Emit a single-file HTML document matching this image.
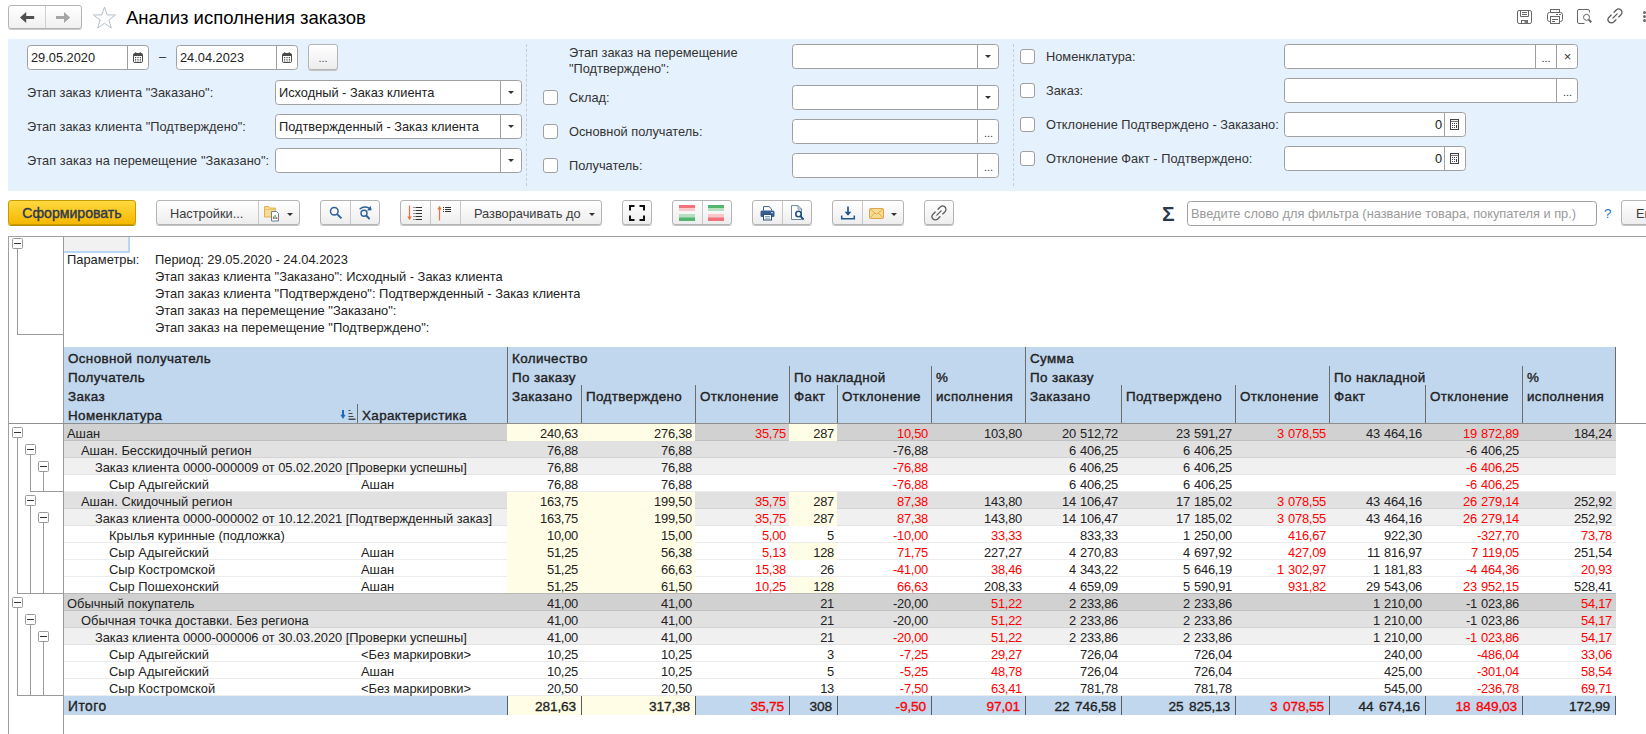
<!DOCTYPE html><html lang="ru"><head><meta charset="utf-8"><title>Анализ исполнения заказов</title><style>
*{box-sizing:border-box}
html,body{margin:0;padding:0}
body{width:1646px;height:734px;overflow:hidden;background:#fff;font-family:"Liberation Sans",Arial,sans-serif;font-size:12.8px;color:#333;position:relative}
.abs{position:absolute}
.title{position:absolute;left:126px;top:6px;font-size:18.5px;line-height:24px;color:#000;white-space:nowrap}
.nav{position:absolute;left:8px;top:5px;width:74px;height:24px;border:1px solid #b4b4b4;border-radius:3px;background:linear-gradient(#fff,#f0f0f0);box-shadow:0 1px 0 #c9c9c9}
.nav i{position:absolute;left:36px;top:0;width:1px;height:22px;background:#d0d0d0}
.panel{position:absolute;left:8px;top:39px;width:1638px;height:152px;background:#e5f1fc}
.vsep{position:absolute;top:5px;height:142px;width:0;border-left:1px dashed #c5cdd6}
.lbl{position:absolute;white-space:nowrap;line-height:16px;color:#333}
.inp{position:absolute;height:25px;border:1px solid #a0a0a0;border-radius:3.500px;background:#fff;overflow:hidden}
.inp .t{position:absolute;left:3px;top:0;line-height:23px;white-space:nowrap;color:#222}
.inp .b{position:absolute;top:0;bottom:0;border-left:1px solid #a0a0a0;text-align:center;line-height:23px;color:#333}
.cb{position:absolute;width:15px;height:15px;border:1px solid #a0a0a0;border-radius:3px;background:#fff}
.arr{position:absolute;width:0;height:0;border-left:3px solid transparent;border-right:3px solid transparent;border-top:3px solid #333}
.btn{position:absolute;top:200px;height:25px;border:1px solid #b4b4b4;border-radius:3px;background:linear-gradient(#fff,#ededed);box-shadow:0 1px 0 #c4c4c4;white-space:nowrap;line-height:25px;color:#3c3c3c;font-size:12.8px}
.btn i.d{position:absolute;top:0;width:1px;height:23px;background:#c8c8c8}
.btn svg{position:absolute}
.report{position:absolute;left:8px;top:236px;width:1638px;height:498px;border-top:1px solid #a0a0a0;border-left:1px solid #a0a0a0;background:#fff;font-size:12.9px;color:#222}
.row{position:absolute;left:56px;width:1552px;height:17px}
.c{position:absolute;top:0;height:17px;line-height:19px;white-space:nowrap;overflow:hidden}
.n{text-align:right;padding-right:3px;letter-spacing:-0.25px;word-spacing:.8px}
.r{color:#ff0000}
.y{background:#fffde5}
.hd{position:absolute;font-weight:normal;font-size:13.4px;letter-spacing:.38px;-webkit-text-stroke:.38px #222;white-space:nowrap;line-height:19px;color:#222}
.vl{position:absolute;width:1px;background:#6c6c6c}
.tb{position:absolute;width:11px;height:11px;border:1px solid #9a9a9a;border-radius:1.5px;background:#fff}
.tb:after{content:"";position:absolute;left:1px;top:4px;width:7px;height:1px;background:#333}
.tl{position:absolute;background:#9a9a9a}
</style></head><body>
<div class="nav"><i></i><svg class="abs" style="left:11px;top:6px" width="15" height="11" viewBox="0 0 15 11"><path d="M0 5.5L6.2 0V3.9H14.2V7.1H6.2V11Z" fill="#505050"/></svg><svg class="abs" style="left:47px;top:6px" width="15" height="11" viewBox="0 0 15 11"><path d="M14.2 5.5L8 0V3.9H0V7.1H8V11Z" fill="#a6a6a6"/></svg></div>
<svg class="abs" style="left:92px;top:5.500px" width="25" height="24" viewBox="0 0 25 24"><path d="M12.5 1.0 L15.2 8.9 L23.5 9.0 L16.9 14.0 L19.3 22.0 L12.5 17.2 L5.7 22.0 L8.1 14.0 L1.5 9.0 L9.8 8.9Z" fill="#fff" stroke="#b4c0c8" stroke-width="1"/></svg>
<div class="title">Анализ исполнения заказов</div>
<svg class="abs" style="left:1517px;top:10px" width="15" height="14" viewBox="0 0 15 14" fill="none" stroke="#666" stroke-width="1"><rect x="0.500" y="0.500" width="14" height="13" rx="1.600"/><path d="M3.500 0.500V6.500H11.500V0.500M5 2.500H10M5 4.500H10"/><rect x="4.500" y="10.500" width="6" height="3"/><rect x="7.500" y="10.500" width="3" height="3" fill="#7a7a7a" stroke="none"/></svg>
<svg class="abs" style="left:1547px;top:9px" width="16" height="15" viewBox="0 0 16 15" fill="none" stroke="#666" stroke-width="1"><rect x="3.500" y="0.500" width="9" height="3"/><rect x="0.500" y="3.500" width="15" height="9" rx="2"/><rect x="3.500" y="7.500" width="9" height="7" fill="#fff"/><path d="M5 10.500H11M5 12.500H8M9 5.500h2M12 5.500h2"/></svg>
<svg class="abs" style="left:1577px;top:9px" width="16" height="16" viewBox="0 0 16 16" fill="none" stroke="#666" stroke-width="1"><path d="M12.500 3.500V2a1.500 1.500 0 0 0 -1.500 -1.500H2A1.500 1.500 0 0 0 0.500 2V13a1.500 1.500 0 0 0 1.500 1.500H7.500"/><circle cx="9.500" cy="8.300" r="3"/><path d="M11.700 10.600L14.300 13.300" stroke-width="2"/></svg>
<svg class="abs" style="left:1605.560px;top:7.470px" width="18" height="18" viewBox="0 0 18 18" fill="none" stroke="#5a5a5a" stroke-width="1.250" stroke-linecap="round"><g transform="translate(9 9) rotate(-45)"><path d="M2 -3.350H5.100A3.350 3.350 0 0 1 5.100 3.350H2"/><path d="M-2 -3.350H-5.100A3.350 3.350 0 0 0 -5.100 3.350H-2"/><path d="M-3 0H3"/></g></svg>
<div class="abs" style="left:1643px;top:11px;width:3px;height:3px;border-radius:2px;background:#6a6a6a"></div><div class="abs" style="left:1643px;top:15px;width:3px;height:3px;border-radius:2px;background:#6a6a6a"></div><div class="abs" style="left:1643px;top:19px;width:3px;height:3px;border-radius:2px;background:#6a6a6a"></div>
<div class="panel">
<div class="inp" style="left:19px;top:6px;width:122px"><span class="t">29.05.2020</span><span class="b" style="left:99px;width:22px"></span><svg class="abs" style="left:104.5px;top:6px" width="10" height="11" viewBox="0 0 10 11"><rect x="0.500" y="1.500" width="9" height="9" rx="1.200" fill="#fff" stroke="#4a4a4a"/><path d="M0.500 2.700a1.200 1.200 0 0 1 1.200 -1.200h6.600a1.200 1.200 0 0 1 1.200 1.200V4H0.500z" fill="#4a4a4a"/><path d="M2.700 0.300v1.800M7.300 0.300v1.800" stroke="#4a4a4a" stroke-width="1.200"/><path d="M2 5.500h1.200M4.400 5.500h1.200M6.800 5.500h1.200M2 7.300h1.200M4.400 7.300h1.200M6.800 7.300h1.200M2 9h1.200M4.400 9h1.200M6.800 9h1.200" stroke="#4a4a4a" stroke-width="1"/></svg></div>
<div class="lbl" style="left:151px;top:10px;">–</div>
<div class="inp" style="left:168px;top:6px;width:122px"><span class="t">24.04.2023</span><span class="b" style="left:99px;width:22px"></span><svg class="abs" style="left:104.5px;top:6px" width="10" height="11" viewBox="0 0 10 11"><rect x="0.500" y="1.500" width="9" height="9" rx="1.200" fill="#fff" stroke="#4a4a4a"/><path d="M0.500 2.700a1.200 1.200 0 0 1 1.200 -1.200h6.600a1.200 1.200 0 0 1 1.200 1.200V4H0.500z" fill="#4a4a4a"/><path d="M2.700 0.300v1.800M7.300 0.300v1.800" stroke="#4a4a4a" stroke-width="1.200"/><path d="M2 5.500h1.200M4.400 5.500h1.200M6.800 5.500h1.200M2 7.300h1.200M4.400 7.300h1.200M6.800 7.300h1.200M2 9h1.200M4.400 9h1.200M6.800 9h1.200" stroke="#4a4a4a" stroke-width="1"/></svg></div>
<div class="btn" style="left:300px;top:5px;width:30px;height:26px;text-align:center;font-size:11px;color:#444;line-height:26px">...</div>
<div class="lbl" style="left:19px;top:46px;">Этап заказ клиента "Заказано":</div>
<div class="inp" style="left:267px;top:41px;width:247px"><span class="t">Исходный - Заказ клиента</span><span class="b" style="left:224px;width:22px"></span><span class="arr" style="left:232px;top:10px"></span></div>
<div class="lbl" style="left:19px;top:80px;">Этап заказ клиента "Подтверждено":</div>
<div class="inp" style="left:267px;top:75px;width:247px"><span class="t">Подтвержденный - Заказ клиента</span><span class="b" style="left:224px;width:22px"></span><span class="arr" style="left:232px;top:10px"></span></div>
<div class="lbl" style="left:19px;top:114px;letter-spacing:.07px">Этап заказ на перемещение "Заказано":</div>
<div class="inp" style="left:267px;top:109px;width:247px"><span class="t"></span><span class="b" style="left:224px;width:22px"></span><span class="arr" style="left:232px;top:10px"></span></div>
<div class="vsep" style="left:518px"></div>
<div class="lbl" style="left:561px;top:6px;">Этап заказ на перемещение<br>"Подтверждено":</div>
<div class="inp" style="left:784px;top:5px;width:207px"><span class="t"></span><span class="b" style="left:184px;width:22px"></span><span class="arr" style="left:192px;top:10px"></span></div>
<div class="cb" style="left:535px;top:51px"></div>
<div class="lbl" style="left:561px;top:51px;">Склад:</div>
<div class="inp" style="left:784px;top:46px;width:207px"><span class="t"></span><span class="b" style="left:184px;width:22px"></span><span class="arr" style="left:192px;top:10px"></span></div>
<div class="cb" style="left:535px;top:85px"></div>
<div class="lbl" style="left:561px;top:85px;">Основной получатель:</div>
<div class="inp" style="left:784px;top:80px;width:207px"><span class="b" style="left:184px;width:22px;font-size:11px;line-height:27px">...</span></div>
<div class="cb" style="left:535px;top:119px"></div>
<div class="lbl" style="left:561px;top:119px;">Получатель:</div>
<div class="inp" style="left:784px;top:114px;width:207px"><span class="b" style="left:184px;width:22px;font-size:11px;line-height:27px">...</span></div>
<div class="vsep" style="left:1005px"></div>
<div class="cb" style="left:1012px;top:10px"></div>
<div class="lbl" style="left:1038px;top:10px;">Номенклатура:</div>
<div class="inp" style="left:1276px;top:5px;width:294px"><span class="b" style="left:250px;width:21px;font-size:11px;line-height:27px">...</span><span class="b" style="left:271px;width:22px;font-size:13px">×</span></div>
<div class="cb" style="left:1012px;top:44px"></div>
<div class="lbl" style="left:1038px;top:44px;">Заказ:</div>
<div class="inp" style="left:1276px;top:39px;width:294px"><span class="b" style="left:271px;width:22px;font-size:11px;line-height:27px">...</span></div>
<div class="cb" style="left:1012px;top:78px"></div>
<div class="lbl" style="left:1038px;top:78px;">Отклонение Подтверждено - Заказано:</div>
<div class="inp" style="left:1276px;top:73px;width:182px"><span class="t" style="left:auto;right:23px">0</span><span class="b" style="left:159px;width:22px"></span><svg class="abs" style="left:165px;top:5.500px" width="9" height="11" viewBox="0 0 9 11"><rect x="0.500" y="0.500" width="8" height="10" fill="#fff" stroke="#444"/><path d="M0.500 2.400h8" stroke="#444" stroke-width="0.800"/><path d="M2 4.500h1M4 4.500h1M6 4.500h1M2 6.500h1M4 6.500h1M2 8.500h1M4 8.500h1" stroke="#444" stroke-width="1"/><path d="M6.500 6v3" stroke="#444" stroke-width="1"/></svg></div>
<div class="cb" style="left:1012px;top:112px"></div>
<div class="lbl" style="left:1038px;top:112px;">Отклонение Факт - Подтверждено:</div>
<div class="inp" style="left:1276px;top:107px;width:182px"><span class="t" style="left:auto;right:23px">0</span><span class="b" style="left:159px;width:22px"></span><svg class="abs" style="left:165px;top:5.500px" width="9" height="11" viewBox="0 0 9 11"><rect x="0.500" y="0.500" width="8" height="10" fill="#fff" stroke="#444"/><path d="M0.500 2.400h8" stroke="#444" stroke-width="0.800"/><path d="M2 4.500h1M4 4.500h1M6 4.500h1M2 6.500h1M4 6.500h1M2 8.500h1M4 8.500h1" stroke="#444" stroke-width="1"/><path d="M6.500 6v3" stroke="#444" stroke-width="1"/></svg></div>
</div>
<div class="btn" style="left:8px;width:128px;border-color:#c79a00;background:linear-gradient(#ffd840,#f5b800);box-shadow:0 1px 0 #b98f00;text-align:center;color:#2c384e;font-size:14.100px;-webkit-text-stroke:.38px #2c384e;line-height:24px">Сформировать</div>
<div class="btn" style="left:156px;width:144px"><span class="abs" style="left:13px">Настройки...</span><i class="d" style="left:101px"></i><svg style="left:107px;top:4px" width="17" height="17" viewBox="0 0 17 17"><path d="M0.5 12V1.5h4.2l1.2 1.6h5.6v8.9z" fill="#f6dc94" stroke="#e2b04a"/><path d="M0.5 4.5h11" stroke="#e9c368" /><path d="M7.5 6.5h5l2 2v7.500h-7z" fill="#fff" stroke="#6d7f92"/><path d="M9.6 14v-2.600" stroke="#e24a4a" stroke-width="1.2"/><path d="M11.1 14v-4" stroke="#3aa655" stroke-width="1.2"/><path d="M12.6 14v-1.800" stroke="#e24a4a" stroke-width="1.2"/></svg><span class="arr" style="left:130px;top:12px"></span></div>
<div class="btn" style="left:320px;width:60px"><i class="d" style="left:29px"></i><svg style="left:8px;top:5px" width="14" height="14" viewBox="0 0 14 14"><circle cx="5.3" cy="5.3" r="3.8" fill="none" stroke="#2b6199" stroke-width="1.5"/><path d="M8.1 8.1L12.4 12.4" stroke="#2b6199" stroke-width="1.9"/></svg><svg style="left:37px;top:3px" width="16" height="17" viewBox="0 0 16 17"><circle cx="6" cy="9.300" r="3" fill="none" stroke="#2b6199" stroke-width="1.4"/><path d="M8.2 11.500L11.6 15" stroke="#2b6199" stroke-width="1.8"/><path d="M1.6 5.2Q6 1.200 11.200 4.200" fill="none" stroke="#2b6199" stroke-width="1.4"/><path d="M9 6.4L13.6 6.2L12.6 1.800Z" fill="#2b6199"/></svg></div>
<div class="btn" style="left:400px;width:202px"><i class="d" style="left:29px"></i><i class="d" style="left:59px"></i><svg style="left:5px;top:4px" width="18" height="17" viewBox="0 0 18 17"><path d="M3.5 0.500v13" stroke="#f07238" stroke-width="1.2"/><path d="M1.300 11.600L3.500 15.200L5.700 11.600Z" fill="#f07238"/><path d="M7.500 2.500h1M9.500 2.500H16M7.500 5.500h1M9.500 5.500H16M7.500 8.500h1M9.500 8.500H16M7.500 11.500h1M9.500 11.500H16M7.500 14.500h1M9.500 14.500H16" stroke="#333" stroke-width="1"/></svg><svg style="left:35px;top:4px" width="18" height="17" viewBox="0 0 18 17"><path d="M3.500 2.500v13" stroke="#f07238" stroke-width="1.2"/><path d="M1.300 4.400L3.500 0.800L5.700 4.400Z" fill="#f07238"/><path d="M7 2.500h1M9 2.500h6M7 4.500h1M9 4.500h6M7 6.500h1M9 6.500h6" stroke="#333" stroke-width="1"/></svg><span class="abs" style="left:73px">Разворачивать до</span><span class="arr" style="left:188px;top:12px"></span></div>
<div class="btn" style="left:622px;width:30px"><svg style="left:6px;top:4px" width="16" height="16" viewBox="0 0 16 16" fill="none" stroke="#111" stroke-width="2"><path d="M1 5.500V1H5.500M10.500 1H15V5.500M15 10.500V15H10.500M5.500 15H1V10.500"/></svg></div>
<div class="btn" style="left:672px;width:60px"><i class="d" style="left:29px"></i><svg style="left:6px;top:4px" width="16" height="16" viewBox="0 0 16 16"><rect width="16" height="3.200" fill="#f0737c"/><rect y="3.200" width="16" height="2.800" fill="#f9c6ca"/><rect y="9" width="16" height="3.400" fill="#b7dfbf"/><rect y="12.400" width="16" height="3.600" fill="#55b46e"/></svg><svg style="left:35px;top:4px" width="16" height="16" viewBox="0 0 16 16"><rect width="16" height="3.200" fill="#55b46e"/><rect y="3.200" width="16" height="2.800" fill="#b7dfbf"/><rect y="9" width="16" height="3.400" fill="#f9c6ca"/><rect y="12.400" width="16" height="3.600" fill="#f0737c"/></svg></div>
<div class="btn" style="left:752px;width:60px"><i class="d" style="left:29px"></i><svg style="left:7px;top:5px" width="15" height="15" viewBox="0 0 15 15"><path d="M3.500 4.500V0.600h5.500l2.500 2.400V4.500" fill="#fff" stroke="#3d5f88" stroke-width="1"/><rect x="0.500" y="4.500" width="14" height="6.500" rx="1.500" fill="#345f90"/><rect x="3.500" y="8.500" width="8" height="5.500" fill="#fff" stroke="#2c4f7a" stroke-width="1"/><path d="M5 10.500h5M5 12.200h5" stroke="#6d86a6" stroke-width="0.8"/><rect x="11.200" y="6" width="1.600" height="1.200" fill="#cfe0f2"/></svg><svg style="left:37px;top:4px" width="16" height="16" viewBox="0 0 16 16"><path d="M1.500 0.600h6.500l3.500 3.500v10.400h-10z" fill="#fff" stroke="#6d86a6" stroke-width="1"/><path d="M8 0.600v3.500h3.500" fill="none" stroke="#6d86a6" stroke-width="0.9"/><circle cx="8.500" cy="9" r="2.700" fill="#fff" stroke="#1f4e80" stroke-width="1.600"/><path d="M10.500 11.100L13.600 14.600" stroke="#1f4e80" stroke-width="2"/></svg></div>
<div class="btn" style="left:832px;width:72px"><i class="d" style="left:29px"></i><svg style="left:7px;top:5px" width="16" height="14" viewBox="0 0 16 14"><path d="M8 0.500v6.500" stroke="#1d5690" stroke-width="1.700"/><path d="M4.600 5.800L8 9.700L11.400 5.800Z" fill="#1d5690"/><path d="M1.700 9.500V12.700H14.300V9.500" fill="none" stroke="#1d5690" stroke-width="1.500"/></svg><svg style="left:36px;top:7px" width="15" height="11" viewBox="0 0 15 11"><rect x="0.500" y="0.500" width="14" height="10" rx="1" fill="#f9dc92" stroke="#dba64a" stroke-width="1"/><path d="M1 1L7.500 6.300L14 1M1 10L5.600 5M14 10L9.400 5" fill="none" stroke="#dba64a" stroke-width="0.9"/></svg><span class="arr" style="left:58px;top:12px"></span></div>
<div class="btn" style="left:924px;width:30px"><svg style="left:4.500px;top:3.400px" width="18" height="18" viewBox="0 0 18 18" fill="none" stroke="#5a5a5a" stroke-width="1.250" stroke-linecap="round"><g transform="translate(9 9) rotate(-45)"><path d="M2 -3.350H5.100A3.350 3.350 0 0 1 5.100 3.350H2"/><path d="M-2 -3.350H-5.100A3.350 3.350 0 0 0 -5.100 3.350H-2"/><path d="M-3 0H3"/></g></svg></div>
<div class="abs" style="left:1162px;top:202px;font-size:21px;line-height:24px;font-weight:bold;color:#2a3a4a">Σ</div>
<div class="inp" style="left:1187px;top:201px;width:410px"><span class="t" style="color:#9a9a9a;font-size:12.8px">Введите слово для фильтра (название товара, покупателя и пр.)</span></div>
<div class="abs" style="left:1604px;top:206px;color:#1a6fc4;font-size:13.5px">?</div>
<div class="btn" style="left:1621px;width:60px"><span class="abs" style="left:14px">Еще</span></div>
<div class="report">
<div class="tl" style="left:54px;top:0;width:1px;height:497px"></div>
<div class="abs" style="left:55px;top:0;width:66px;height:16px;background:#f1f1f1;border-right:2px solid #b7d6f5;border-bottom:2px solid #b7d6f5"></div>
<div class="c" style="left:58px;top:12.5px">Параметры:</div>
<div class="c" style="left:146px;top:12.5px">Период: 29.05.2020 - 24.04.2023</div>
<div class="c" style="left:146px;top:29.5px">Этап заказ клиента "Заказано": Исходный - Заказ клиента</div>
<div class="c" style="left:146px;top:46.5px">Этап заказ клиента "Подтверждено": Подтвержденный - Заказ клиента</div>
<div class="c" style="left:146px;top:63.5px">Этап заказ на перемещение "Заказано":</div>
<div class="c" style="left:146px;top:80.5px">Этап заказ на перемещение "Подтверждено":</div>
<div class="tb" style="left:3px;top:1px"></div>
<div class="tl" style="left:8px;top:12px;width:1px;height:85px"></div>
<div class="tl" style="left:8px;top:97px;width:46px;height:1px"></div>
<div class="abs" style="left:55px;top:110px;width:1552px;height:76px;background:#c1d7ee"></div>
<div class="tl" style="left:0;top:186px;width:1637px;height:1px;background:#8e8e8e"></div>
<div class="hd" style="left:59px;top:112px">Основной получатель</div>
<div class="hd" style="left:59px;top:131px">Получатель</div>
<div class="hd" style="left:59px;top:150px">Заказ</div>
<div class="hd" style="left:59px;top:169px">Номенклатура</div>
<div class="hd" style="left:353px;top:169px">Характеристика</div>
<div class="hd" style="left:503px;top:112px">Количество</div>
<div class="hd" style="left:503px;top:131px">По заказу</div>
<div class="hd" style="left:503px;top:150px">Заказано</div>
<div class="hd" style="left:577px;top:150px">Подтверждено</div>
<div class="hd" style="left:691px;top:150px">Отклонение</div>
<div class="hd" style="left:785px;top:131px">По накладной</div>
<div class="hd" style="left:785px;top:150px">Факт</div>
<div class="hd" style="left:833px;top:150px">Отклонение</div>
<div class="hd" style="left:927px;top:131px">%</div>
<div class="hd" style="left:927px;top:150px">исполнения</div>
<div class="hd" style="left:1021px;top:112px">Сумма</div>
<div class="hd" style="left:1021px;top:131px">По заказу</div>
<div class="hd" style="left:1021px;top:150px">Заказано</div>
<div class="hd" style="left:1117px;top:150px">Подтверждено</div>
<div class="hd" style="left:1231px;top:150px">Отклонение</div>
<div class="hd" style="left:1325px;top:131px">По накладной</div>
<div class="hd" style="left:1325px;top:150px">Факт</div>
<div class="hd" style="left:1421px;top:150px">Отклонение</div>
<div class="hd" style="left:1518px;top:131px">%</div>
<div class="hd" style="left:1518px;top:150px">исполнения</div>
<div class="vl" style="left:498px;top:110px;height:76px"></div>
<div class="vl" style="left:1016px;top:110px;height:76px"></div>
<div class="vl" style="left:780px;top:129px;height:57px"></div>
<div class="vl" style="left:922px;top:129px;height:57px"></div>
<div class="vl" style="left:1320px;top:129px;height:57px"></div>
<div class="vl" style="left:1513px;top:129px;height:57px"></div>
<div class="vl" style="left:572px;top:148px;height:38px"></div>
<div class="vl" style="left:686px;top:148px;height:38px"></div>
<div class="vl" style="left:828px;top:148px;height:38px"></div>
<div class="vl" style="left:1112px;top:148px;height:38px"></div>
<div class="vl" style="left:1226px;top:148px;height:38px"></div>
<div class="vl" style="left:1416px;top:148px;height:38px"></div>
<div class="vl" style="left:348px;top:167px;height:19px"></div>
<div class="vl" style="left:1606px;top:110px;height:76px"></div>
<svg class="abs" style="left:331px;top:172px" width="16" height="12" viewBox="0 0 16 12"><path d="M3 1v6" stroke="#1f6bb5" stroke-width="2"/><path d="M0.400 5.800L3 10L5.600 5.800Z" fill="#1f6bb5"/><path d="M8.500 1.500h2M8.500 4.500h4M8.500 7.500h5" stroke="#444" stroke-width="1"/><path d="M8.500 10.200h7" stroke="#333" stroke-width="1.300"/></svg>
<div class="row" style="left:55px;top:187px;background:#d1d1d1;border-bottom:1px solid #c0c0c0"><div class="c" style="left:3px">Ашан</div><div class="c n y" style="left:443px;width:74px">240,63</div><div class="c n y" style="left:517px;width:114px">276,38</div><div class="c n r" style="left:631px;width:94px">35,75</div><div class="c n y" style="left:725px;width:48px">287</div><div class="c n r" style="left:773px;width:94px">10,50</div><div class="c n" style="left:867px;width:94px">103,80</div><div class="c n" style="left:961px;width:96px">20 512,72</div><div class="c n" style="left:1057px;width:114px">23 591,27</div><div class="c n r" style="left:1171px;width:94px">3 078,55</div><div class="c n" style="left:1265px;width:96px">43 464,16</div><div class="c n r" style="left:1361px;width:97px">19 872,89</div><div class="c n" style="left:1458px;width:93px">184,24</div></div>
<div class="row" style="left:55px;top:204px;background:#e1e1e1;border-bottom:1px solid #d3d3d3"><div class="c" style="left:17px">Ашан. Бесскидочный регион</div><div class="c n" style="left:443px;width:74px">76,88</div><div class="c n" style="left:517px;width:114px">76,88</div><div class="c n" style="left:773px;width:94px">-76,88</div><div class="c n" style="left:961px;width:96px">6 406,25</div><div class="c n" style="left:1057px;width:114px">6 406,25</div><div class="c n" style="left:1361px;width:97px">-6 406,25</div></div>
<div class="row" style="left:55px;top:221px;background:#f0f0f0;border-bottom:1px solid #e2e2e2"><div class="c" style="left:31px;letter-spacing:-.05px">Заказ клиента 0000-000009 от 05.02.2020 [Проверки успешны]</div><div class="c n" style="left:443px;width:74px">76,88</div><div class="c n" style="left:517px;width:114px">76,88</div><div class="c n r" style="left:773px;width:94px">-76,88</div><div class="c n" style="left:961px;width:96px">6 406,25</div><div class="c n" style="left:1057px;width:114px">6 406,25</div><div class="c n r" style="left:1361px;width:97px">-6 406,25</div></div>
<div class="row" style="left:55px;top:238px;background:#ffffff;border-bottom:1px solid #ececec"><div class="c" style="left:45px">Сыр Адыгейский</div><div class="c" style="left:297px">Ашан</div><div class="c n" style="left:443px;width:74px">76,88</div><div class="c n" style="left:517px;width:114px">76,88</div><div class="c n r" style="left:773px;width:94px">-76,88</div><div class="c n" style="left:961px;width:96px">6 406,25</div><div class="c n" style="left:1057px;width:114px">6 406,25</div><div class="c n r" style="left:1361px;width:97px">-6 406,25</div></div>
<div class="row" style="left:55px;top:255px;background:#e1e1e1;border-bottom:1px solid #d3d3d3"><div class="c" style="left:17px">Ашан. Скидочный регион</div><div class="c n y" style="left:443px;width:74px">163,75</div><div class="c n y" style="left:517px;width:114px">199,50</div><div class="c n r" style="left:631px;width:94px">35,75</div><div class="c n y" style="left:725px;width:48px">287</div><div class="c n r" style="left:773px;width:94px">87,38</div><div class="c n" style="left:867px;width:94px">143,80</div><div class="c n" style="left:961px;width:96px">14 106,47</div><div class="c n" style="left:1057px;width:114px">17 185,02</div><div class="c n r" style="left:1171px;width:94px">3 078,55</div><div class="c n" style="left:1265px;width:96px">43 464,16</div><div class="c n r" style="left:1361px;width:97px">26 279,14</div><div class="c n" style="left:1458px;width:93px">252,92</div></div>
<div class="row" style="left:55px;top:272px;background:#f0f0f0;border-bottom:1px solid #e2e2e2"><div class="c" style="left:31px;letter-spacing:-.05px">Заказ клиента 0000-000002 от 10.12.2021 [Подтвержденный заказ]</div><div class="c n y" style="left:443px;width:74px">163,75</div><div class="c n y" style="left:517px;width:114px">199,50</div><div class="c n r" style="left:631px;width:94px">35,75</div><div class="c n y" style="left:725px;width:48px">287</div><div class="c n r" style="left:773px;width:94px">87,38</div><div class="c n" style="left:867px;width:94px">143,80</div><div class="c n" style="left:961px;width:96px">14 106,47</div><div class="c n" style="left:1057px;width:114px">17 185,02</div><div class="c n r" style="left:1171px;width:94px">3 078,55</div><div class="c n" style="left:1265px;width:96px">43 464,16</div><div class="c n r" style="left:1361px;width:97px">26 279,14</div><div class="c n" style="left:1458px;width:93px">252,92</div></div>
<div class="row" style="left:55px;top:289px;background:#ffffff;border-bottom:1px solid #ececec"><div class="c" style="left:45px">Крылья куринные (подложка)</div><div class="c n y" style="left:443px;width:74px">10,00</div><div class="c n y" style="left:517px;width:114px">15,00</div><div class="c n r" style="left:631px;width:94px">5,00</div><div class="c n" style="left:725px;width:48px">5</div><div class="c n r" style="left:773px;width:94px">-10,00</div><div class="c n r" style="left:867px;width:94px">33,33</div><div class="c n" style="left:961px;width:96px">833,33</div><div class="c n" style="left:1057px;width:114px">1 250,00</div><div class="c n r" style="left:1171px;width:94px">416,67</div><div class="c n" style="left:1265px;width:96px">922,30</div><div class="c n r" style="left:1361px;width:97px">-327,70</div><div class="c n r" style="left:1458px;width:93px">73,78</div></div>
<div class="row" style="left:55px;top:306px;background:#ffffff;border-bottom:1px solid #ececec"><div class="c" style="left:45px">Сыр Адыгейский</div><div class="c" style="left:297px">Ашан</div><div class="c n y" style="left:443px;width:74px">51,25</div><div class="c n y" style="left:517px;width:114px">56,38</div><div class="c n r" style="left:631px;width:94px">5,13</div><div class="c n y" style="left:725px;width:48px">128</div><div class="c n r" style="left:773px;width:94px">71,75</div><div class="c n" style="left:867px;width:94px">227,27</div><div class="c n" style="left:961px;width:96px">4 270,83</div><div class="c n" style="left:1057px;width:114px">4 697,92</div><div class="c n r" style="left:1171px;width:94px">427,09</div><div class="c n" style="left:1265px;width:96px">11 816,97</div><div class="c n r" style="left:1361px;width:97px">7 119,05</div><div class="c n" style="left:1458px;width:93px">251,54</div></div>
<div class="row" style="left:55px;top:323px;background:#ffffff;border-bottom:1px solid #ececec"><div class="c" style="left:45px">Сыр Костромской</div><div class="c" style="left:297px">Ашан</div><div class="c n y" style="left:443px;width:74px">51,25</div><div class="c n y" style="left:517px;width:114px">66,63</div><div class="c n r" style="left:631px;width:94px">15,38</div><div class="c n" style="left:725px;width:48px">26</div><div class="c n r" style="left:773px;width:94px">-41,00</div><div class="c n r" style="left:867px;width:94px">38,46</div><div class="c n" style="left:961px;width:96px">4 343,22</div><div class="c n" style="left:1057px;width:114px">5 646,19</div><div class="c n r" style="left:1171px;width:94px">1 302,97</div><div class="c n" style="left:1265px;width:96px">1 181,83</div><div class="c n r" style="left:1361px;width:97px">-4 464,36</div><div class="c n r" style="left:1458px;width:93px">20,93</div></div>
<div class="row" style="left:55px;top:340px;background:#ffffff;border-bottom:1px solid #ececec"><div class="c" style="left:45px">Сыр Пошехонский</div><div class="c" style="left:297px">Ашан</div><div class="c n y" style="left:443px;width:74px">51,25</div><div class="c n y" style="left:517px;width:114px">61,50</div><div class="c n r" style="left:631px;width:94px">10,25</div><div class="c n y" style="left:725px;width:48px">128</div><div class="c n r" style="left:773px;width:94px">66,63</div><div class="c n" style="left:867px;width:94px">208,33</div><div class="c n" style="left:961px;width:96px">4 659,09</div><div class="c n" style="left:1057px;width:114px">5 590,91</div><div class="c n r" style="left:1171px;width:94px">931,82</div><div class="c n" style="left:1265px;width:96px">29 543,06</div><div class="c n r" style="left:1361px;width:97px">23 952,15</div><div class="c n" style="left:1458px;width:93px">528,41</div></div>
<div class="row" style="left:55px;top:357px;background:#d1d1d1;border-bottom:1px solid #c0c0c0;box-shadow:0 -1px 0 #b9b9b9"><div class="c" style="left:3px">Обычный покупатель</div><div class="c n" style="left:443px;width:74px">41,00</div><div class="c n" style="left:517px;width:114px">41,00</div><div class="c n" style="left:725px;width:48px">21</div><div class="c n" style="left:773px;width:94px">-20,00</div><div class="c n r" style="left:867px;width:94px">51,22</div><div class="c n" style="left:961px;width:96px">2 233,86</div><div class="c n" style="left:1057px;width:114px">2 233,86</div><div class="c n" style="left:1265px;width:96px">1 210,00</div><div class="c n" style="left:1361px;width:97px">-1 023,86</div><div class="c n r" style="left:1458px;width:93px">54,17</div></div>
<div class="row" style="left:55px;top:374px;background:#e1e1e1;border-bottom:1px solid #d3d3d3"><div class="c" style="left:17px">Обычная точка доставки. Без региона</div><div class="c n" style="left:443px;width:74px">41,00</div><div class="c n" style="left:517px;width:114px">41,00</div><div class="c n" style="left:725px;width:48px">21</div><div class="c n" style="left:773px;width:94px">-20,00</div><div class="c n r" style="left:867px;width:94px">51,22</div><div class="c n" style="left:961px;width:96px">2 233,86</div><div class="c n" style="left:1057px;width:114px">2 233,86</div><div class="c n" style="left:1265px;width:96px">1 210,00</div><div class="c n" style="left:1361px;width:97px">-1 023,86</div><div class="c n r" style="left:1458px;width:93px">54,17</div></div>
<div class="row" style="left:55px;top:391px;background:#f0f0f0;border-bottom:1px solid #e2e2e2"><div class="c" style="left:31px;letter-spacing:-.05px">Заказ клиента 0000-000006 от 30.03.2020 [Проверки успешны]</div><div class="c n" style="left:443px;width:74px">41,00</div><div class="c n" style="left:517px;width:114px">41,00</div><div class="c n" style="left:725px;width:48px">21</div><div class="c n r" style="left:773px;width:94px">-20,00</div><div class="c n r" style="left:867px;width:94px">51,22</div><div class="c n" style="left:961px;width:96px">2 233,86</div><div class="c n" style="left:1057px;width:114px">2 233,86</div><div class="c n" style="left:1265px;width:96px">1 210,00</div><div class="c n r" style="left:1361px;width:97px">-1 023,86</div><div class="c n r" style="left:1458px;width:93px">54,17</div></div>
<div class="row" style="left:55px;top:408px;background:#ffffff;border-bottom:1px solid #ececec"><div class="c" style="left:45px">Сыр Адыгейский</div><div class="c" style="left:297px">&lt;Без маркировки&gt;</div><div class="c n" style="left:443px;width:74px">10,25</div><div class="c n" style="left:517px;width:114px">10,25</div><div class="c n" style="left:725px;width:48px">3</div><div class="c n r" style="left:773px;width:94px">-7,25</div><div class="c n r" style="left:867px;width:94px">29,27</div><div class="c n" style="left:961px;width:96px">726,04</div><div class="c n" style="left:1057px;width:114px">726,04</div><div class="c n" style="left:1265px;width:96px">240,00</div><div class="c n r" style="left:1361px;width:97px">-486,04</div><div class="c n r" style="left:1458px;width:93px">33,06</div></div>
<div class="row" style="left:55px;top:425px;background:#ffffff;border-bottom:1px solid #ececec"><div class="c" style="left:45px">Сыр Адыгейский</div><div class="c" style="left:297px">Ашан</div><div class="c n" style="left:443px;width:74px">10,25</div><div class="c n" style="left:517px;width:114px">10,25</div><div class="c n" style="left:725px;width:48px">5</div><div class="c n r" style="left:773px;width:94px">-5,25</div><div class="c n r" style="left:867px;width:94px">48,78</div><div class="c n" style="left:961px;width:96px">726,04</div><div class="c n" style="left:1057px;width:114px">726,04</div><div class="c n" style="left:1265px;width:96px">425,00</div><div class="c n r" style="left:1361px;width:97px">-301,04</div><div class="c n r" style="left:1458px;width:93px">58,54</div></div>
<div class="row" style="left:55px;top:442px;background:#ffffff;border-bottom:1px solid #ececec"><div class="c" style="left:45px">Сыр Костромской</div><div class="c" style="left:297px">&lt;Без маркировки&gt;</div><div class="c n" style="left:443px;width:74px">20,50</div><div class="c n" style="left:517px;width:114px">20,50</div><div class="c n" style="left:725px;width:48px">13</div><div class="c n r" style="left:773px;width:94px">-7,50</div><div class="c n r" style="left:867px;width:94px">63,41</div><div class="c n" style="left:961px;width:96px">781,78</div><div class="c n" style="left:1057px;width:114px">781,78</div><div class="c n" style="left:1265px;width:96px">545,00</div><div class="c n r" style="left:1361px;width:97px">-236,78</div><div class="c n r" style="left:1458px;width:93px">69,71</div></div>
<div class="row" style="left:55px;top:459px;height:19px;background:#c1d7ee;font-size:13.700px;-webkit-text-stroke:.32px"><div class="c" style="left:4px;height:19px;line-height:21px;letter-spacing:.5px;font-size:13.8px">Итого</div><div class="c n y" style="left:443px;width:74px;height:19px;line-height:21px;padding-right:5px;letter-spacing:-.15px;word-spacing:2px">281,63</div><div class="c n y" style="left:517px;width:114px;height:19px;line-height:21px;padding-right:5px;letter-spacing:-.15px;word-spacing:2px">317,38</div><div class="c n r" style="left:631px;width:94px;height:19px;line-height:21px;padding-right:5px;letter-spacing:-.15px;word-spacing:2px">35,75</div><div class="c n" style="left:725px;width:48px;height:19px;line-height:21px;padding-right:5px;letter-spacing:-.15px;word-spacing:2px">308</div><div class="c n r" style="left:773px;width:94px;height:19px;line-height:21px;padding-right:5px;letter-spacing:-.15px;word-spacing:2px">-9,50</div><div class="c n r" style="left:867px;width:94px;height:19px;line-height:21px;padding-right:5px;letter-spacing:-.15px;word-spacing:2px">97,01</div><div class="c n" style="left:961px;width:96px;height:19px;line-height:21px;padding-right:5px;letter-spacing:-.15px;word-spacing:2px">22 746,58</div><div class="c n" style="left:1057px;width:114px;height:19px;line-height:21px;padding-right:5px;letter-spacing:-.15px;word-spacing:2px">25 825,13</div><div class="c n r" style="left:1171px;width:94px;height:19px;line-height:21px;padding-right:5px;letter-spacing:-.15px;word-spacing:2px">3 078,55</div><div class="c n" style="left:1265px;width:96px;height:19px;line-height:21px;padding-right:5px;letter-spacing:-.15px;word-spacing:2px">44 674,16</div><div class="c n r" style="left:1361px;width:97px;height:19px;line-height:21px;padding-right:5px;letter-spacing:-.15px;word-spacing:2px">18 849,03</div><div class="c n" style="left:1458px;width:93px;height:19px;line-height:21px;padding-right:5px;letter-spacing:-.15px;word-spacing:2px">172,99</div></div>
<div class="vl" style="left:498px;top:459px;height:19px;background:#555d66"></div>
<div class="vl" style="left:572px;top:459px;height:19px;background:#555d66"></div>
<div class="vl" style="left:686px;top:459px;height:19px;background:#555d66"></div>
<div class="vl" style="left:780px;top:459px;height:19px;background:#555d66"></div>
<div class="vl" style="left:828px;top:459px;height:19px;background:#555d66"></div>
<div class="vl" style="left:922px;top:459px;height:19px;background:#555d66"></div>
<div class="vl" style="left:1016px;top:459px;height:19px;background:#555d66"></div>
<div class="vl" style="left:1112px;top:459px;height:19px;background:#555d66"></div>
<div class="vl" style="left:1226px;top:459px;height:19px;background:#555d66"></div>
<div class="vl" style="left:1320px;top:459px;height:19px;background:#555d66"></div>
<div class="vl" style="left:1416px;top:459px;height:19px;background:#555d66"></div>
<div class="vl" style="left:1513px;top:459px;height:19px;background:#555d66"></div>
<div class="vl" style="left:1606px;top:459px;height:19px;background:#555d66"></div>
<div class="tl" style="left:8px;top:201px;width:1px;height:155px"></div>
<div class="tl" style="left:8px;top:356px;width:46px;height:1px"></div>
<div class="tl" style="left:21px;top:218px;width:1px;height:36px"></div>
<div class="tl" style="left:21px;top:254px;width:33px;height:1px"></div>
<div class="tl" style="left:34px;top:235px;width:1px;height:19px"></div>
<div class="tl" style="left:34px;top:254px;width:20px;height:1px"></div>
<div class="tl" style="left:21px;top:269px;width:1px;height:87px"></div>
<div class="tl" style="left:21px;top:356px;width:33px;height:1px"></div>
<div class="tl" style="left:34px;top:286px;width:1px;height:70px"></div>
<div class="tl" style="left:34px;top:356px;width:20px;height:1px"></div>
<div class="tl" style="left:8px;top:371px;width:1px;height:87px"></div>
<div class="tl" style="left:8px;top:458px;width:46px;height:1px"></div>
<div class="tl" style="left:21px;top:388px;width:1px;height:70px"></div>
<div class="tl" style="left:21px;top:458px;width:33px;height:1px"></div>
<div class="tl" style="left:34px;top:405px;width:1px;height:53px"></div>
<div class="tl" style="left:34px;top:458px;width:20px;height:1px"></div>
<div class="tb" style="left:3px;top:190px"></div>
<div class="tb" style="left:16px;top:207px"></div>
<div class="tb" style="left:29px;top:224px"></div>
<div class="tb" style="left:16px;top:258px"></div>
<div class="tb" style="left:29px;top:275px"></div>
<div class="tb" style="left:3px;top:360px"></div>
<div class="tb" style="left:16px;top:377px"></div>
<div class="tb" style="left:29px;top:394px"></div>
</div>
</body></html>
